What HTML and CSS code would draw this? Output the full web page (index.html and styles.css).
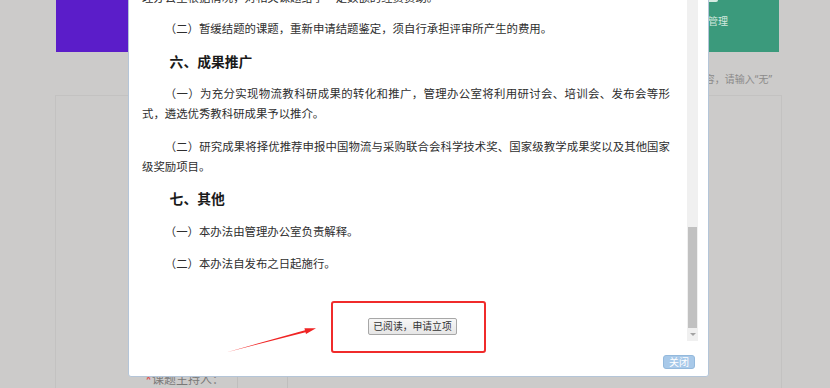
FILE: index.html
```html
<!DOCTYPE html>
<html>

<head>
    <meta name="viewport" content="width=device-width, initial-scale=1.0">
    <title>课题申报</title>
    <link rel="stylesheet" href="styles.css">
</head>

<body>
    <div class="tiles">
        <div class="tile tile-purple"></div>
        <div class="tile tile-green">
            <span class="tile-icon"></span>
            <span class="tile-label">课题管理</span>
        </div>
    </div>
    <div class="hint">如无相关内容，请输入“无”</div>
    <div class="panel">
        <div class="form-space"></div>
        <div class="row">
            <div class="row-label"><span class="req">*</span>课题主持人：</div>
            <div class="row-cell"></div>
            <div class="row-cell row-cell-wide"></div>
        </div>
    </div>

    <div class="dialog">
        <div class="dialog-body">
            <div class="doc">
                <p class="tail">理办公室根据情况，对相关课题给予一定数额的经费资助。</p>
                <p>（二）暂缓结题的课题，重新申请结题鉴定，须自行承担评审所产生的费用。</p>
                <h4>六、成果推广</h4>
                <p>（一）为充分实现物流教科研成果的转化和推广，管理办公室将利用研讨会、培训会、发布会等形式，遴选优秀教科研成果予以推介。</p>
                <p>（二）研究成果将择优推荐申报中国物流与采购联合会科学技术奖、国家级教学成果奖以及其他国家级奖励项目。</p>
                <h4>七、其他</h4>
                <p>（一）本办法由管理办公室负责解释。</p>
                <p>（二）本办法自发布之日起施行。</p>
                <div class="confirm">
                    <button class="confirm-btn" id="confirm_btn">已阅读，申请立项</button>
                </div>
            </div>
            <div class="vbar">
                <div class="vbar-thumb"></div>
                <div class="vbar-down"></div>
            </div>
        </div>
        <div class="dialog-foot">
            <button class="close-btn" id="close_btn">关闭</button>
        </div>
    </div>

    <div class="mark-box"></div>
    <svg class="mark-arrow" width="830" height="388" viewBox="0 0 830 388">
        <polygon fill="#f02424"
            points="226,352.5 305.5,332.2 306,334.1 316,328.3 304.4,328.2 305,330.2" />
    </svg>
</body>

</html>
```

FILE: styles.css
```css
html,
body {
    margin: 0;
}

body {
    position: relative;
    width: 830px;
    height: 388px;
    overflow: hidden;
    background-color: #cccbca;
    font-family: "Noto Sans", "Noto Sans CJK SC", sans-serif;
}

.tiles {
    display: flex;
    justify-content: space-between;
    width: 723px;
    padding-left: 56px;
}

.tile {
    width: 142px;
    height: 52px;
}

.tile-purple {
    background-color: #5b1dc9;
}

.tile-green {
    display: flex;
    flex-direction: column;
    align-items: center;
    background-color: #3b9a7c;
}

.tile-icon {
    width: 20px;
    height: 2px;
    background-color: #d6ebe2;
    border-radius: 0 0 2px 2px;
}

.tile-label {
    margin-top: 12px;
    font-size: 10px;
    line-height: 14px;
    color: #d3e9df;
}

.hint {
    display: flex;
    justify-content: flex-end;
    width: 772px;
    margin-top: 20px;
    font-size: 10px;
    line-height: 14px;
    color: #8b8a89;
}

.panel {
    box-sizing: border-box;
    width: 727px;
    height: 293px;
    margin: 9px 0 0 55px;
    overflow: hidden;
    border: 1px solid #c3c2c1;
    border-bottom: none;
}

.form-space {
    height: 274px;
}

.row {
    display: flex;
    height: 40px;
}

.row-label {
    box-sizing: border-box;
    width: 181px;
    padding-right: 13px;
    text-align: right;
    font-size: 12px;
    line-height: 20px;
    color: #7a7978;
}

.req {
    color: #e04848;
}

.row-cell {
    width: 49px;
    border-left: 1px solid #bfbebd;
}

.row-cell-wide {
    flex: 1;
}

/* dialog */

.dialog {
    position: absolute;
    left: 128px;
    top: -1px;
    box-sizing: border-box;
    width: 581px;
    height: 378px;
    display: flex;
    flex-direction: column;
    background-color: white;
    border: 1px solid #b4c5d8;
    border-radius: 0 0 3px 3px;
}

.dialog-body {
    display: flex;
    height: 341px;
    padding-right: 10px;
    overflow: hidden;
}

.doc {
    flex: 1;
    padding: 0 17px 0 13px;
    color: #2e2e2e;
    font-size: 11.4px;
    line-height: 20px;
    text-spacing-trim: space-all;
}

.doc p {
    margin: 0 0 12.5px;
    text-indent: 2em;
    text-align: justify;
}

.doc p.tail {
    margin-top: -12px;
    margin-bottom: 11px;
    text-indent: 0;
}

.doc h4 {
    margin: 0 0 12.5px;
    font-size: 13.8px;
    line-height: 20px;
    text-indent: 2em;
    color: #1a1a1a;
    font-weight: bold;
}

.confirm {
    display: flex;
    justify-content: center;
    margin-top: 44px;
    padding-left: 13px;
}

.confirm-btn {
    font-family: inherit;
    font-size: 9.8px;
    line-height: 15px;
    padding: 0 4px;
    color: #333;
    background: linear-gradient(#f7f7f7, #e6e6e6);
    border: 1px solid #a7a7a7;
    border-radius: 2px;
    cursor: pointer;
}

.vbar {
    width: 11px;
    display: flex;
    flex-direction: column;
    justify-content: flex-end;
    align-items: center;
    background-color: #f0f0f0;
}

.vbar-thumb {
    width: 9px;
    height: 101px;
    background-color: #c1c1c1;
}

.vbar-down {
    display: flex;
    align-items: center;
    justify-content: center;
    width: 11px;
    height: 13px;
}

.vbar-down::before {
    content: "";
    border-left: 3px solid transparent;
    border-right: 3px solid transparent;
    border-top: 3px solid #a3a3a3;
}

.dialog-foot {
    display: flex;
    justify-content: flex-end;
    padding: 14px 13px 0 0;
}

.close-btn {
    font-family: inherit;
    font-size: 10px;
    line-height: 12px;
    padding: 0 5px;
    color: white;
    background-color: #a8c9e9;
    border: 1px solid #94b9dc;
    border-radius: 3px;
    cursor: pointer;
}

/* annotation marks */

.mark-box {
    position: absolute;
    left: 331px;
    top: 301px;
    box-sizing: border-box;
    width: 155px;
    height: 52px;
    border: 2px solid #f02b2b;
    border-radius: 3px;
}

.mark-arrow {
    position: absolute;
    left: 0;
    top: 0;
    pointer-events: none;
}
```
